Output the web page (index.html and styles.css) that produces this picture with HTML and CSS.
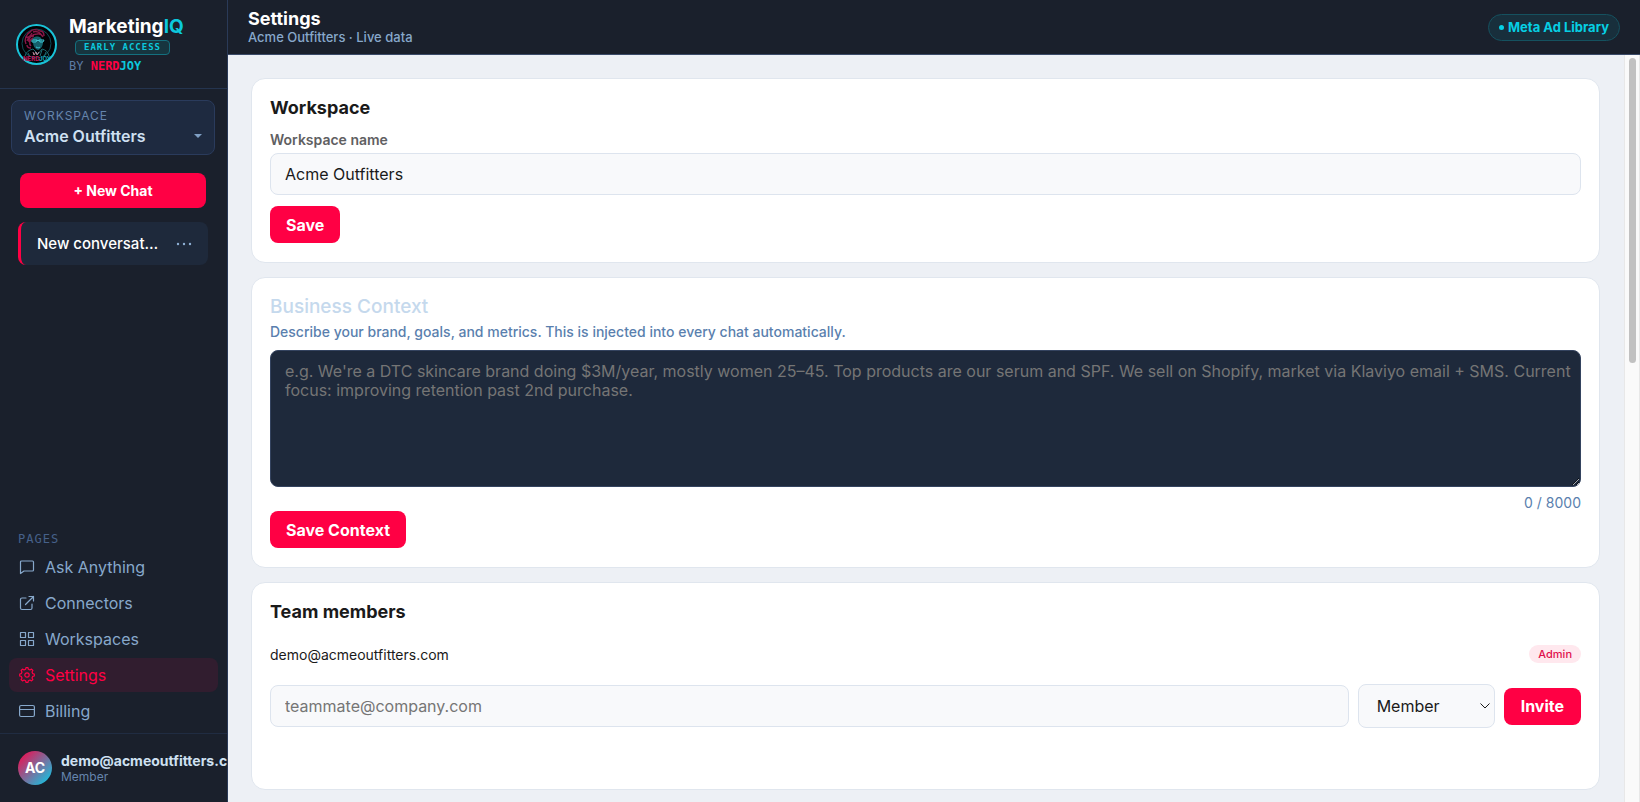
FILE: index.html
```html
<!DOCTYPE html>
<html lang="en">
<head>
  <meta charset="UTF-8">
  <meta name="viewport" content="width=device-width, initial-scale=1">
  <title>MarketingIQ - Settings</title>
  <link rel="stylesheet" href="styles.css">
</head>
<body>
  <aside class="sidebar">
    <div class="brand">
      <svg class="brand-logo" viewBox="0 0 41 41" aria-hidden="true">
        <circle cx="20.5" cy="20.5" r="19.5" fill="#020306" stroke="#19c3d8" stroke-width="2"/>
        <circle cx="20.5" cy="19.500" r="14.500" fill="none" stroke="#0f4d59"/>
        <path d="M10 20c-2-4 0-10 4-12 2-3 7-3 10-1 3 0 4 2 4 5M13 18c-1-4 3-8 8-8 3-1 5 1 6 3M10 13c3 1 5-2 6-4M15 22c-2-2-2-6 2-8M17 8c3-1 6 0 8 2M11 17c1-3 4-5 7-5M11 21c0 2 2 3 4 3" fill="none" stroke="#8a1748" stroke-width="1.400"/>
        <path d="M17 14c2-2 6-2 8 0l2 4c0 4-2 7-5 8-3-1-5-4-5-8z" fill="#14616c"/>
        <path d="M16 16h5l1 1 1-1h5M16 16v2h4l1-2M23 16l1 2h3l1-2M20 23c2 1 3 1 4 0" fill="none" stroke="#3fc5d2"/>
        <path d="M9 32c1-4 4-6 8-7l5 5 4-5c4 1 6 3 7 7M12 29l2 4M30 28l-2 5M26 26l-2 6" fill="none" stroke="#1c6b72"/>
        <path d="M17 28l1 3 2-3 1 3 2-3" fill="none" stroke="#b9899a"/>
        <text x="7" y="37" class="logo-nerd">NERD</text>
        <text x="23" y="37" class="logo-joy">JOY</text>
      </svg>
      <div class="brand-text">
        <div class="brand-name">Marketing<span>IQ</span></div>
        <div class="brand-badge">EARLY ACCESS</div>
        <div class="brand-by">BY <b class="red">NERD</b><b class="cyan">JOY</b></div>
      </div>
    </div>

    <button class="workspace-switch">
      <span class="workspace-label">WORKSPACE</span>
      <span class="workspace-current">Acme Outfitters <i class="caret"></i></span>
    </button>

    <button class="new-chat">+ New Chat</button>

    <div class="chat-item">
      <a href="#" class="chat-title">New conversation</a>
      <button class="chat-menu" aria-label="Conversation options">
        <svg width="16" height="4" viewBox="0 0 16 4" fill="currentColor"><circle cx="2" cy="2" r="1.2"/><circle cx="8" cy="2" r="1.2"/><circle cx="14" cy="2" r="1.2"/></svg>
      </button>
    </div>

    <nav class="pages">
      <div class="pages-label">PAGES</div>
      <a href="#">
        <svg viewBox="0 0 16 16"><path d="M2.5 2h11a1 1 0 0 1 1 1v8a1 1 0 0 1-1 1H5l-3.500 2.500V3a1 1 0 0 1 1-1z"/></svg>
        Ask Anything
      </a>
      <a href="#">
        <svg viewBox="0 0 16 16"><path d="M7 3H3a1.500 1.500 0 0 0-1.500 1.500V13A1.500 1.500 0 0 0 3 14.500h8.500A1.500 1.500 0 0 0 13 13V9M10 1.500h4.500V6M14.500 1.500l-8 8"/></svg>
        Connectors
      </a>
      <a href="#">
        <svg viewBox="0 0 16 16"><path d="M1.500 1.500h5v5h-5zM9.500 1.500h5v5h-5zM1.500 9.500h5v5h-5zM9.500 9.500h5v5h-5z"/></svg>
        Workspaces
      </a>
      <a href="#" class="active">
        <svg viewBox="0 0 16 16"><circle cx="8" cy="8" r="2.200"/><path d="M6.600 2.300L7 .7h2l.4 1.600 1.600.7 1.500-.9 1.400 1.400-.9 1.500.7 1.600 1.600.4v2l-1.600.4-.7 1.600.9 1.500-1.400 1.400-1.500-.9-1.600.7-.4 1.600H7l-.4-1.600-1.600-.7-1.500.9-1.400-1.400.9-1.500-.7-1.600L.7 9V7l1.600-.4.7-1.600-.9-1.500 1.400-1.400 1.500.9z"/></svg>
        Settings
      </a>
      <a href="#">
        <svg viewBox="0 0 16 16"><rect x=".6" y="2.500" width="14.800" height="11" rx="1.500"/><path d="M.6 6.500h14.800"/></svg>
        Billing
      </a>
    </nav>

    <div class="user">
      <div class="avatar">AC</div>
      <div class="user-info">
        <div class="user-name">demo@acmeoutfitters.com</div>
        <div class="user-role">Member</div>
      </div>
    </div>
  </aside>

  <div class="main">
    <header class="topbar">
      <div>
        <h1>Settings</h1>
        <p>Acme Outfitters · Live data</p>
      </div>
      <div class="source-pill">Meta Ad Library</div>
    </header>

    <div class="body-row">
      <main class="content">
        <section class="card">
          <h2>Workspace</h2>
          <label class="field-label" for="ws-name">Workspace name</label>
          <input class="field" id="ws-name" type="text" value="Acme Outfitters">
          <button class="btn">Save</button>
        </section>

        <section class="card">
          <h2 class="light">Business Context</h2>
          <label class="hint" for="context">Describe your brand, goals, and metrics. This is injected into every chat automatically.</label>
          <textarea class="field dark" id="context" placeholder="e.g. We're a DTC skincare brand doing $3M/year, mostly women 25–45. Top products are our serum and SPF. We sell on Shopify, market via Klaviyo email + SMS. Current focus: improving retention past 2nd purchase."></textarea>
          <div class="counter">0 / 8000</div>
          <button class="btn">Save Context</button>
        </section>

        <section class="card">
          <h2>Team members</h2>
          <div class="member">
            <span>demo@acmeoutfitters.com</span>
            <span class="role">Admin</span>
          </div>
          <form class="invite">
            <input class="field" type="email" placeholder="teammate@company.com" aria-label="Teammate email">
            <div class="select-wrap">
              <select class="field" aria-label="Role">
                <option>Member</option>
                <option>Admin</option>
              </select>
              <svg viewBox="0 0 10 6" aria-hidden="true"><path d="M.5.5L5 5 9.500.5"/></svg>
            </div>
            <button class="btn" type="button">Invite</button>
          </form>
        </section>
      </main>
      <div class="scroll-track"><div class="scroll-thumb"></div></div>
    </div>
  </div>
</body>
</html>
```
FILE: styles.css
```css
* {
  box-sizing: border-box;
}

body {
  margin: 0;
  height: 100vh;
  display: flex;
  overflow: hidden;
  background: #edf0f5;
  color: #1a1a1a;
  font-family: Inter, "Liberation Sans", sans-serif;
  font-size: 16px;
}

button, input, select, textarea {
  font: inherit;
}

button {
  border: none;
  cursor: pointer;
}

a {
  text-decoration: none;
}

h1, h2, p {
  margin: 0;
}

/* Sidebar */
.sidebar {
  width: 228px;
  flex-shrink: 0;
  display: flex;
  flex-direction: column;
  background: #1a202c;
  border-right: 1px solid #2a3a58;
  overflow: hidden;
}

.brand {
  display: flex;
  align-items: center;
  gap: 12px;
  height: 89px;
  padding: 0 16px;
  border-bottom: 1px solid #24344f;
}

.brand-logo {
  width: 41px;
  height: 41px;
  flex-shrink: 0;
}

.logo-nerd, .logo-joy {
  font-size: 6px;
  font-weight: 700;
  fill: #c2185b;
}

.logo-joy {
  fill: #19a9bd;
}

.brand-name {
  font-size: 19px;
  line-height: 23px;
  font-weight: 700;
  color: #fff;
}

.brand-name span, .cyan {
  color: #0cc8dc;
}

.red {
  color: #ff0044;
}

.brand-badge {
  width: 95px;
  height: 15px;
  margin: 2px 0 4px 6px;
  border: 1px solid #14707f;
  border-radius: 4px;
  background: #17353f;
  color: #0cc8dc;
  font: 700 9px/13px "DejaVu Sans Mono", monospace;
  letter-spacing: 1px;
  text-align: center;
}

.brand-by {
  color: #5d7ba3;
  font: 12px/15px "DejaVu Sans Mono", monospace;
}

.workspace-switch {
  display: flex;
  flex-direction: column;
  height: 55px;
  margin: 11px 12px 0 11px;
  padding: 7px 12px;
  border: 1px solid #2a3b5c;
  border-radius: 8px;
  background: #1e2a40;
  text-align: left;
}

.workspace-label {
  font-size: 12px;
  line-height: 16px;
  letter-spacing: 1px;
  color: #6585ad;
}

.workspace-current {
  display: flex;
  align-items: center;
  justify-content: space-between;
  width: 100%;
  line-height: 24px;
  font-size: 16px;
  font-weight: 600;
  color: #cfe0f2;
}

.caret {
  border: 4px solid transparent;
  border-top-color: #7f9fc4;
  border-bottom: none;
}

.new-chat {
  height: 35px;
  margin: 18px 21px 0 20px;
  border-radius: 8px;
  background: #ff0044;
  color: #fff;
  font-size: 14px;
  font-weight: 700;
}

.chat-item {
  display: flex;
  align-items: center;
  gap: 16px;
  height: 43px;
  margin: 14px 19px 0 18px;
  padding: 0 16px;
  border-left: 3px solid #ff0044;
  border-radius: 8px;
  background: #1e293b;
}

.chat-title {
  flex: 1;
  overflow: hidden;
  text-overflow: ellipsis;
  white-space: nowrap;
  color: #fff;
  font-size: 15px;
  font-weight: 500;
}

.chat-menu {
  display: flex;
  padding: 0;
  background: none;
  color: #8fb0d4;
}

.pages {
  display: flex;
  flex-direction: column;
  gap: 2px;
  margin-top: auto;
  padding: 0 9px 5px;
}

.pages-label {
  padding: 0 9px 2px;
  color: #46608a;
  font: 12px/14px "DejaVu Sans Mono", monospace;
  letter-spacing: 1px;
}

.pages a {
  display: flex;
  align-items: center;
  gap: 10px;
  height: 34px;
  padding: 0 10px;
  border-radius: 8px;
  color: #87a8cb;
}

.pages a.active {
  background: #311d2f;
  color: #ff0044;
}

.pages svg {
  width: 16px;
  height: 16px;
  fill: none;
  stroke: currentColor;
  stroke-width: 1.2;
  stroke-linejoin: round;
  stroke-linecap: round;
}

.user {
  display: flex;
  align-items: center;
  gap: 9px;
  height: 69px;
  padding-left: 18px;
  border-top: 1px solid #202c42;
}

.avatar {
  width: 34px;
  height: 34px;
  flex-shrink: 0;
  border-radius: 50%;
  background: linear-gradient(135deg, #ff0044, #00d4f0);
  color: #fff;
  font-size: 14px;
  font-weight: 700;
  line-height: 34px;
  text-align: center;
}

.user-name {
  color: #cfe0f2;
  font-size: 14px;
  line-height: 17px;
  font-weight: 700;
}

.user-role {
  color: #6585ad;
  font-size: 12px;
  line-height: 15px;
}

/* Main column */
.main {
  flex: 1;
  min-width: 0;
  display: flex;
  flex-direction: column;
}

.topbar {
  display: flex;
  align-items: center;
  justify-content: space-between;
  height: 55px;
  flex-shrink: 0;
  padding: 0 20px;
  background: #1a202c;
  border-bottom: 1px solid #3a4a68;
}

.topbar h1 {
  font-size: 18px;
  line-height: 20px;
  color: #fff;
}

.topbar p {
  font-size: 13px;
  line-height: 17px;
  font-weight: 500;
  color: #87a8cb;
}

.source-pill {
  height: 27px;
  padding: 0 10px;
  border: 1px solid #15515f;
  border-radius: 14px;
  background: #182f3c;
  color: #06cfe4;
  font-size: 13px;
  font-weight: 700;
  line-height: 25px;
}

.source-pill::before {
  content: "";
  display: inline-block;
  width: 5px;
  height: 5px;
  margin-right: 4px;
  border-radius: 50%;
  background: currentColor;
  vertical-align: middle;
}

.body-row {
  flex: 1;
  min-height: 0;
  display: flex;
}

.content {
  flex: 1;
  min-width: 0;
  display: flex;
  flex-direction: column;
  gap: 14px;
  padding: 23px 24px 23px 23px;
  overflow: hidden;
}

.card {
  display: flex;
  flex-direction: column;
  align-items: flex-start;
  flex-shrink: 0;
  padding: 17px 18px 19px;
  border: 1px solid #e0e6ee;
  border-radius: 14px;
  background: #fff;
}

.card h2 {
  font-size: 18px;
  line-height: 23px;
}

.card h2.light {
  font-size: 19px;
  line-height: 24px;
  font-weight: 500;
  color: #c5d9ed;
}

.field-label {
  margin: 12px 0 4px;
  font-size: 14px;
  line-height: 18px;
  font-weight: 600;
  color: #5f6062;
}

.field {
  width: 100%;
  height: 42px;
  padding: 0 14px;
  border: 1px solid #dde4ee;
  border-radius: 8px;
  background: #f8f9fb;
  color: #1a1a1a;
}

.field::placeholder {
  color: #757575;
}

.btn {
  height: 37px;
  padding: 0 16px;
  border-radius: 8px;
  background: #ff0044;
  color: #fff;
  font-weight: 700;
}

#ws-name {
  margin-bottom: 11px;
}

.hint {
  margin: 4px 0 9px;
  font-size: 14px;
  line-height: 18px;
  font-weight: 500;
  color: #5a7fae;
}

.field.dark {
  height: 137px;
  padding: 11px 4px 11px 14px;
  border-color: #34435f;
  background: #1e293b;
  color: #fff;
  line-height: 19px;
  resize: vertical;
}

.counter {
  align-self: flex-end;
  margin: 8px 0 0;
  font-size: 14px;
  line-height: 16px;
  color: #5a7fae;
}

.member {
  display: flex;
  align-items: center;
  justify-content: space-between;
  width: 100%;
  height: 42px;
  margin: 10px 0 9px;
  font-size: 14px;
}

.role {
  padding: 0 9px;
  border-radius: 9px;
  background: #ffe8ee;
  color: #e0104c;
  font-size: 11px;
  line-height: 18px;
  font-weight: 500;
}

.invite {
  display: flex;
  align-items: center;
  gap: 9px;
  width: 100%;
  margin-bottom: 42px;
}

.invite > input {
  flex: 1;
}

.invite .btn {
  padding: 0 17px;
}

.select-wrap {
  position: relative;
  width: 137px;
}

.select-wrap select {
  appearance: none;
  height: 44px;
  padding: 0 18px;
}

.select-wrap svg {
  position: absolute;
  top: 19px;
  right: 5px;
  width: 10px;
  height: 6px;
  fill: none;
  stroke: #1a1a1a;
  pointer-events: none;
}

.scroll-track {
  width: 16px;
  padding: 3px 3px 0 4px;
  border: solid #e8e8e8;
  border-width: 0 1px;
  background: #fafafa;
}

.scroll-thumb {
  height: 41%;
  border-radius: 5px;
  background: #c1c1c1;
}
```
